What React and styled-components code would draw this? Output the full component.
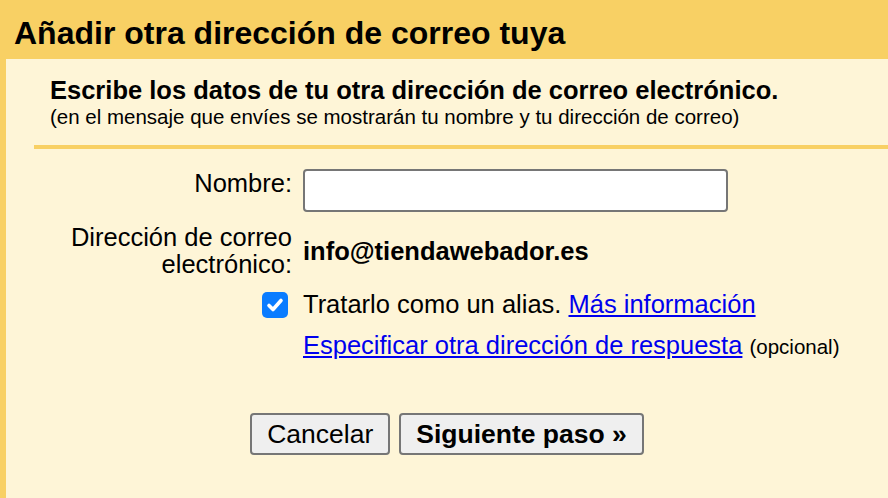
import React from 'react';
import styled, { createGlobalStyle } from 'styled-components';

const GlobalStyle = createGlobalStyle`
  html, body {
    margin: 0;
    padding: 0;
    background: #f8d064;
    font-family: 'Liberation Sans', Arial, sans-serif;
    color: #000;
  }
`;

const Page = styled.div`
  display: flex;
  flex-direction: column;
  min-height: 100vh;
  padding-left: 6px;
  box-sizing: border-box;
`;

const Header = styled.h1`
  margin: 0;
  height: 59px;
  display: flex;
  align-items: center;
  padding: 7px 0 0 8px;
  box-sizing: border-box;
  font-size: 32px;
  font-weight: bold;
`;

const Panel = styled.div`
  flex: 1;
  background: #fef5d7;
  padding-top: 17px;
`;

const Intro = styled.div`
  padding-left: 44px;
`;

const Lead = styled.div`
  font-size: 25.5px;
  line-height: 29px;
  font-weight: bold;
`;

const Note = styled.div`
  font-size: 20.5px;
  line-height: 24px;
`;

const Divider = styled.hr`
  margin: 16px 0 0 28px;
  border: 0;
  height: 4px;
  background: #f8d064;
`;

const Form = styled.div`
  display: grid;
  grid-template-columns: 286px 1fr;
  column-gap: 11px;
  row-gap: 12px;
  margin-top: 20px;
  font-size: 25.5px;
  line-height: 29px;
`;

const Label = styled.div`
  text-align: right;
  display: flex;
  align-items: ${(p) => (p.$top ? 'flex-start' : 'center')};
  justify-content: flex-end;
  line-height: ${(p) => (p.$tight ? '27px' : '29px')};
`;

const Value = styled.div`
  display: flex;
  align-items: ${(p) => (p.$top ? 'flex-start' : 'center')};
  font-weight: ${(p) => (p.$bold ? 'bold' : 'normal')};
`;

const TextInput = styled.input`
  width: 425px;
  height: 43px;
  box-sizing: border-box;
  border: 2px solid #767676;
  border-radius: 4px;
  background: #fff;
  font: inherit;
  padding: 0 8px;
  outline: none;
`;

const Check = styled.span`
  width: 26px;
  height: 26px;
  margin-right: 4px;
  border-radius: 5px;
  background: #0a7cff;
  display: flex;
  align-items: center;
  justify-content: center;
`;

const Link = styled.a`
  color: #0000ee;
  text-decoration: underline;
  text-underline-offset: 2px;
  cursor: pointer;
`;

const Small = styled.span`
  font-size: 20.5px;
`;

const Actions = styled.div`
  display: flex;
  justify-content: center;
  gap: 9px;
  margin-top: 52px;
`;

const Button = styled.button`
  height: 42px;
  padding: 0 15px;
  border: 2px solid #767676;
  border-radius: 4px;
  background: #efefef;
  color: #000;
  font-family: 'Liberation Sans', Arial, sans-serif;
  font-size: 26.5px;
  font-weight: ${(p) => (p.$primary ? 'bold' : 'normal')};
  cursor: pointer;
`;

export default function App() {
  return (
    <>
      <GlobalStyle />
      <Page>
        <Header>Añadir otra dirección de correo tuya</Header>
        <Panel>
          <Intro>
            <Lead>Escribe los datos de tu otra dirección de correo electrónico.</Lead>
            <Note>(en el mensaje que envíes se mostrarán tu nombre y tu dirección de correo)</Note>
          </Intro>
          <Divider />
          <Form>
            <Label $top>Nombre:</Label>
            <Value $top>
              <TextInput type="text" />
            </Value>

            <Label $tight>
              Dirección de correo
              <br />
              electrónico:
            </Label>
            <Value $bold>info@tiendawebador.es</Value>

            <Label>
              <Check>
                <svg width="18" height="18" viewBox="0 0 18 18">
                  <path
                    d="M3 9.5 L7 13.5 L15 4.5"
                    fill="none"
                    stroke="#fff"
                    strokeWidth="3.6"
                    strokeLinecap="round"
                    strokeLinejoin="round"
                  />
                </svg>
              </Check>
            </Label>
            <Value>
              <span>
                Tratarlo como un alias. <Link>Más información</Link>
              </span>
            </Value>

            <div />
            <Value>
              <span>
                <Link>Especificar otra dirección de respuesta</Link> <Small>(opcional)</Small>
              </span>
            </Value>
          </Form>
          <Actions>
            <Button>Cancelar</Button>
            <Button $primary>Siguiente paso »</Button>
          </Actions>
        </Panel>
      </Page>
    </>
  );
}
